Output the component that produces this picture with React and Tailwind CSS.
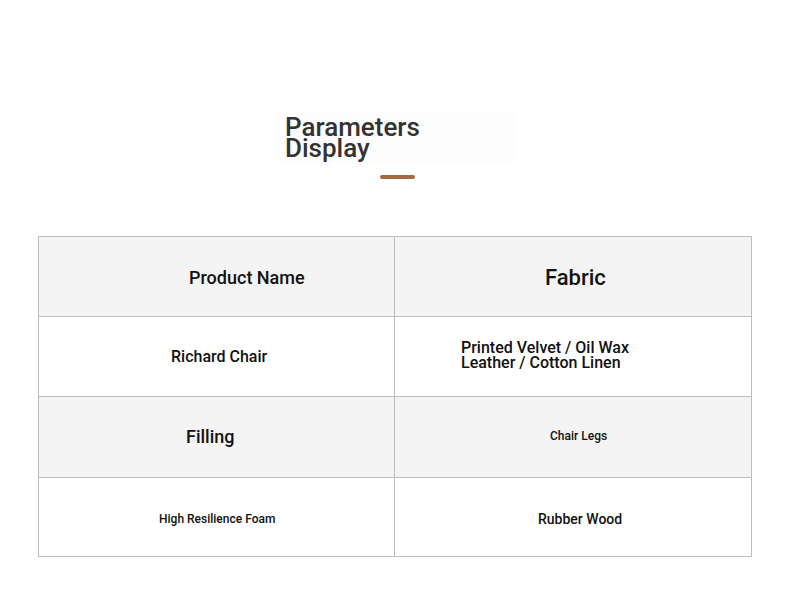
export default function App() {
  const rows = [
    {
      h: 'h-[80px]',
      cells: [
        { text: 'Product Name', cls: 'pl-[150px] text-[18px] pt-[1px]', bg: true },
        { text: 'Fabric', cls: 'pl-[150px] text-[22px] pt-[1px]', bg: true },
      ],
    },
    {
      h: 'h-[80px]',
      cells: [
        { text: 'Richard Chair', cls: 'pl-[132px] text-[16px] pt-[1px]' },
        { text: 'Printed Velvet / Oil Wax\nLeather / Cotton Linen', cls: 'pl-[66px] pb-[4px] text-[16px] leading-[15px] whitespace-pre-line' },
      ],
    },
    {
      h: 'h-[81px]',
      cells: [
        { text: 'Filling', cls: 'pl-[147px] pb-[2px] text-[18px]', bg: true },
        { text: 'Chair Legs', cls: 'pl-[155px] pb-[2px] text-[12px]', bg: true },
      ],
    },
    {
      h: 'h-[78px]',
      cells: [
        { text: 'High Resilience Foam', cls: 'pl-[120px] text-[12px] pt-[4px]' },
        { text: 'Rubber Wood', cls: 'pl-[143px] text-[14px] pt-[4px]' },
      ],
    },
  ]

  return (
    <div className="min-h-[598px] bg-white font-['Roboto',sans-serif] text-[#111]">
      <div className="pt-[113px]">
        <div className="mx-auto w-[240px] bg-[#fdfdfd] py-[4px] pl-[10px]">
          <h1 className="text-[26px] font-medium leading-[21px] text-[#333]">
            Parameters
            <br />
            Display
          </h1>
        </div>
        <div className="mx-auto mt-[12px] h-[4px] w-[35px] translate-x-[2px] rounded-full bg-[#a36a41]" />
      </div>

      <div className="mx-[38px] mt-[57px] border border-[#bdbdbd]">
        {rows.map((row, i) => (
          <div
            key={i}
            className={`grid grid-cols-2 ${row.h} ${i < rows.length - 1 ? 'border-b border-[#bdbdbd]' : ''}`}
          >
            {row.cells.map((c, j) => (
              <div
                key={j}
                className={`flex items-center font-medium ${c.bg ? 'bg-[#f4f4f4]' : 'bg-white'} ${
                  j === 0 ? 'border-r border-[#bdbdbd]' : ''
                } ${c.cls}`}
              >
                <span>{c.text}</span>
              </div>
            ))}
          </div>
        ))}
      </div>
    </div>
  )
}
